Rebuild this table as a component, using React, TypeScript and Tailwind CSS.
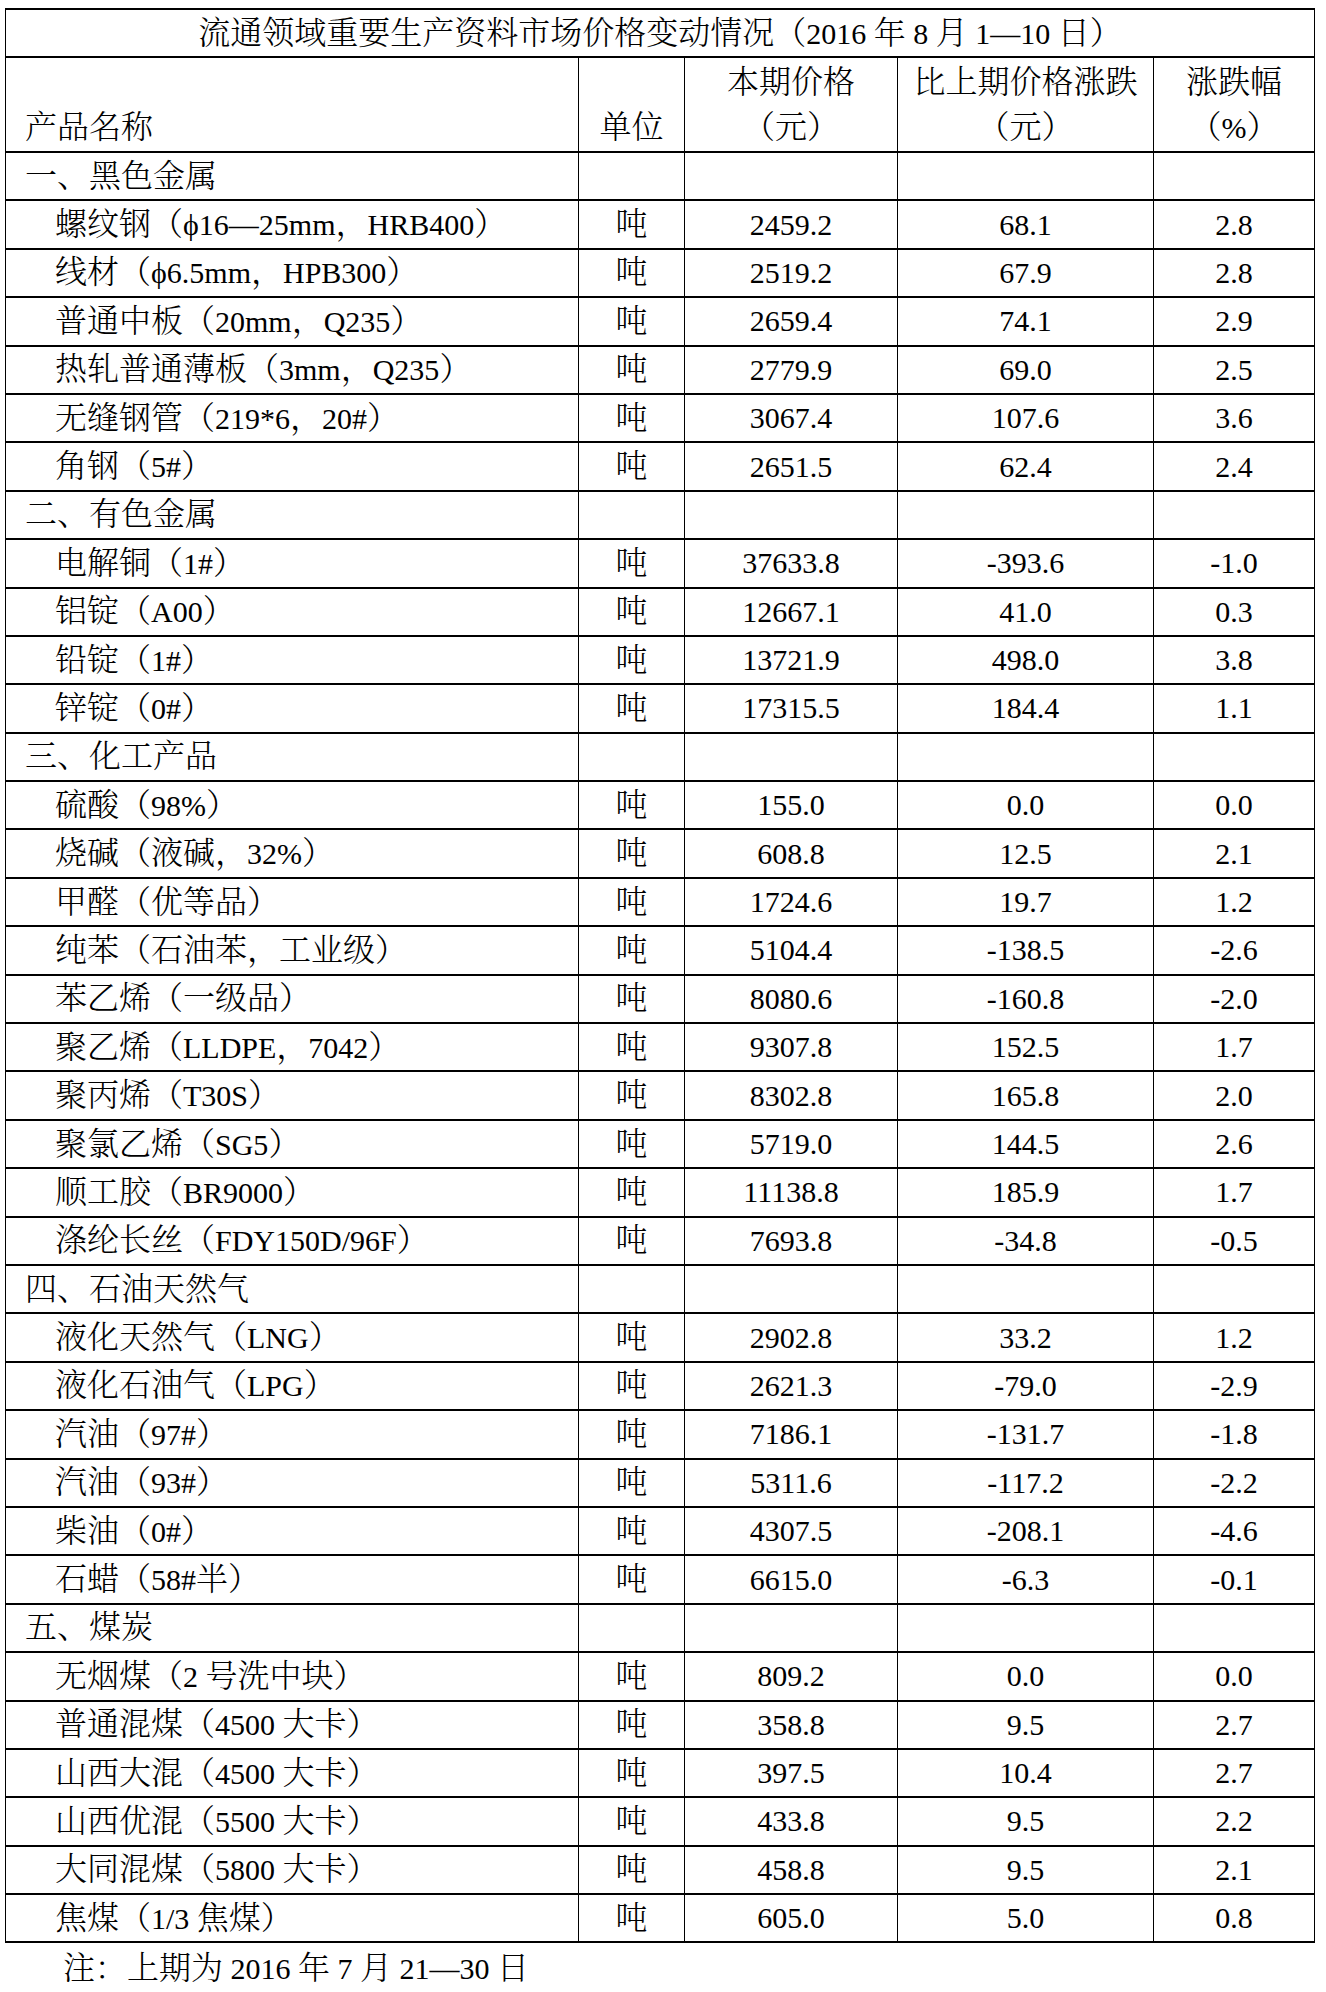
import React from "react";

type Row =
  | { kind: "section"; name: string }
  | { kind: "item"; name: string; price: string; diff: string; pct: string };

const S = (name: string): Row => ({ kind: "section", name });
const I = (name: string, price: string, diff: string, pct: string): Row => ({
  kind: "item",
  name,
  price,
  diff,
  pct,
});

const rows: Row[] = [
  S("一、黑色金属"),
  I("螺纹钢（\u03D516—25mm，HRB400）", "2459.2", "68.1", "2.8"),
  I("线材（\u03D56.5mm，HPB300）", "2519.2", "67.9", "2.8"),
  I("普通中板（20mm，Q235）", "2659.4", "74.1", "2.9"),
  I("热轧普通薄板（3mm，Q235）", "2779.9", "69.0", "2.5"),
  I("无缝钢管（219*6，20#）", "3067.4", "107.6", "3.6"),
  I("角钢（5#）", "2651.5", "62.4", "2.4"),
  S("二、有色金属"),
  I("电解铜（1#）", "37633.8", "-393.6", "-1.0"),
  I("铝锭（A00）", "12667.1", "41.0", "0.3"),
  I("铅锭（1#）", "13721.9", "498.0", "3.8"),
  I("锌锭（0#）", "17315.5", "184.4", "1.1"),
  S("三、化工产品"),
  I("硫酸（98%）", "155.0", "0.0", "0.0"),
  I("烧碱（液碱，32%）", "608.8", "12.5", "2.1"),
  I("甲醛（优等品）", "1724.6", "19.7", "1.2"),
  I("纯苯（石油苯，工业级）", "5104.4", "-138.5", "-2.6"),
  I("苯乙烯（一级品）", "8080.6", "-160.8", "-2.0"),
  I("聚乙烯（LLDPE，7042）", "9307.8", "152.5", "1.7"),
  I("聚丙烯（T30S）", "8302.8", "165.8", "2.0"),
  I("聚氯乙烯（SG5）", "5719.0", "144.5", "2.6"),
  I("顺工胶（BR9000）", "11138.8", "185.9", "1.7"),
  I("涤纶长丝（FDY150D/96F）", "7693.8", "-34.8", "-0.5"),
  S("四、石油天然气"),
  I("液化天然气（LNG）", "2902.8", "33.2", "1.2"),
  I("液化石油气（LPG）", "2621.3", "-79.0", "-2.9"),
  I("汽油（97#）", "7186.1", "-131.7", "-1.8"),
  I("汽油（93#）", "5311.6", "-117.2", "-2.2"),
  I("柴油（0#）", "4307.5", "-208.1", "-4.6"),
  I("石蜡（58#半）", "6615.0", "-6.3", "-0.1"),
  S("五、煤炭"),
  I("无烟煤（2 号洗中块）", "809.2", "0.0", "0.0"),
  I("普通混煤（4500 大卡）", "358.8", "9.5", "2.7"),
  I("山西大混（4500 大卡）", "397.5", "10.4", "2.7"),
  I("山西优混（5500 大卡）", "433.8", "9.5", "2.2"),
  I("大同混煤（5800 大卡）", "458.8", "9.5", "2.1"),
  I("焦煤（1/3 焦煤）", "605.0", "5.0", "0.8"),
];

const FONT =
  "font-['Liberation_Serif','Noto_Serif_CJK_SC','Noto_Sans_CJK_SC',serif]";

// Wrap CJK runs so the Chinese glyphs get the slightly larger size of the original.
function T({ text }: { text: string }) {
  const parts = text.split(/([\u3000-\u303f\u4e00-\u9fff\uff00-\uffef]+)/);
  return (
    <span className="whitespace-pre">
      {parts.map((p, i) =>
        /[\u3000-\u303f\u4e00-\u9fff\uff00-\uffef]/.test(p) ? (
          <span key={i} className="text-[32px]">
            {p}
          </span>
        ) : (
          <span key={i}>{p}</span>
        )
      )}
    </span>
  );
}

export default function App() {
  return (
    <div
      className={`w-[1326px] h-[1992px] bg-white text-black ${FONT} font-light text-[30px] leading-[40px] pt-[8px] pl-[5px]`}
    >
      <div className="w-[1310px] border-t-2 border-x border-black">
        {/* Title */}
        <div className="h-[48px] border-b-2 border-black flex items-center justify-center">
          <T text="流通领域重要生产资料市场价格变动情况（2016 年 8 月 1—10 日）" />
        </div>
        {/* Header */}
        <div className="h-[95px] border-b-2 border-black grid grid-cols-[573px_106px_213px_256px_160px] leading-[45px]">
          <div className="border-r border-black flex items-end pl-[19px] pb-[1px]">
            <T text="产品名称" />
          </div>
          <div className="border-r border-black flex items-end justify-center pb-[1px]">
            <T text="单位" />
          </div>
          <div className="border-r border-black flex flex-col items-center justify-center">
            <T text="本期价格" />
            <T text="（元）" />
          </div>
          <div className="border-r border-black flex flex-col items-center justify-center">
            <T text="比上期价格涨跌" />
            <T text="（元）" />
          </div>
          <div className="flex flex-col items-center justify-center">
            <T text="涨跌幅" />
            <span>
              <span className="text-[32px]">（</span>%<span className="text-[32px]">）</span>
            </span>
          </div>
        </div>
        {/* Body */}
        {rows.map((r, i) => (
          <div
            key={i}
            className="h-[48.4px] border-b-2 border-black grid grid-cols-[573px_106px_213px_256px_160px]"
          >
            <div
              className={`border-r border-black flex items-center ${
                r.kind === "section" ? "pl-[19px]" : "pl-[49px]"
              }`}
            >
              <T text={r.name} />
            </div>
            <div className="border-r border-black flex items-center justify-center">
              {r.kind === "item" ? <T text="吨" /> : ""}
            </div>
            <div className="border-r border-black flex items-center justify-center">
              {r.kind === "item" ? r.price : ""}
            </div>
            <div className="border-r border-black flex items-center justify-center">
              {r.kind === "item" ? r.diff : ""}
            </div>
            <div className="flex items-center justify-center">
              {r.kind === "item" ? r.pct : ""}
            </div>
          </div>
        ))}
      </div>
      <div className="mt-[5px] pl-[58px]">
        <T text="注：上期为 2016 年 7 月 21—30 日" />
      </div>
    </div>
  );
}
